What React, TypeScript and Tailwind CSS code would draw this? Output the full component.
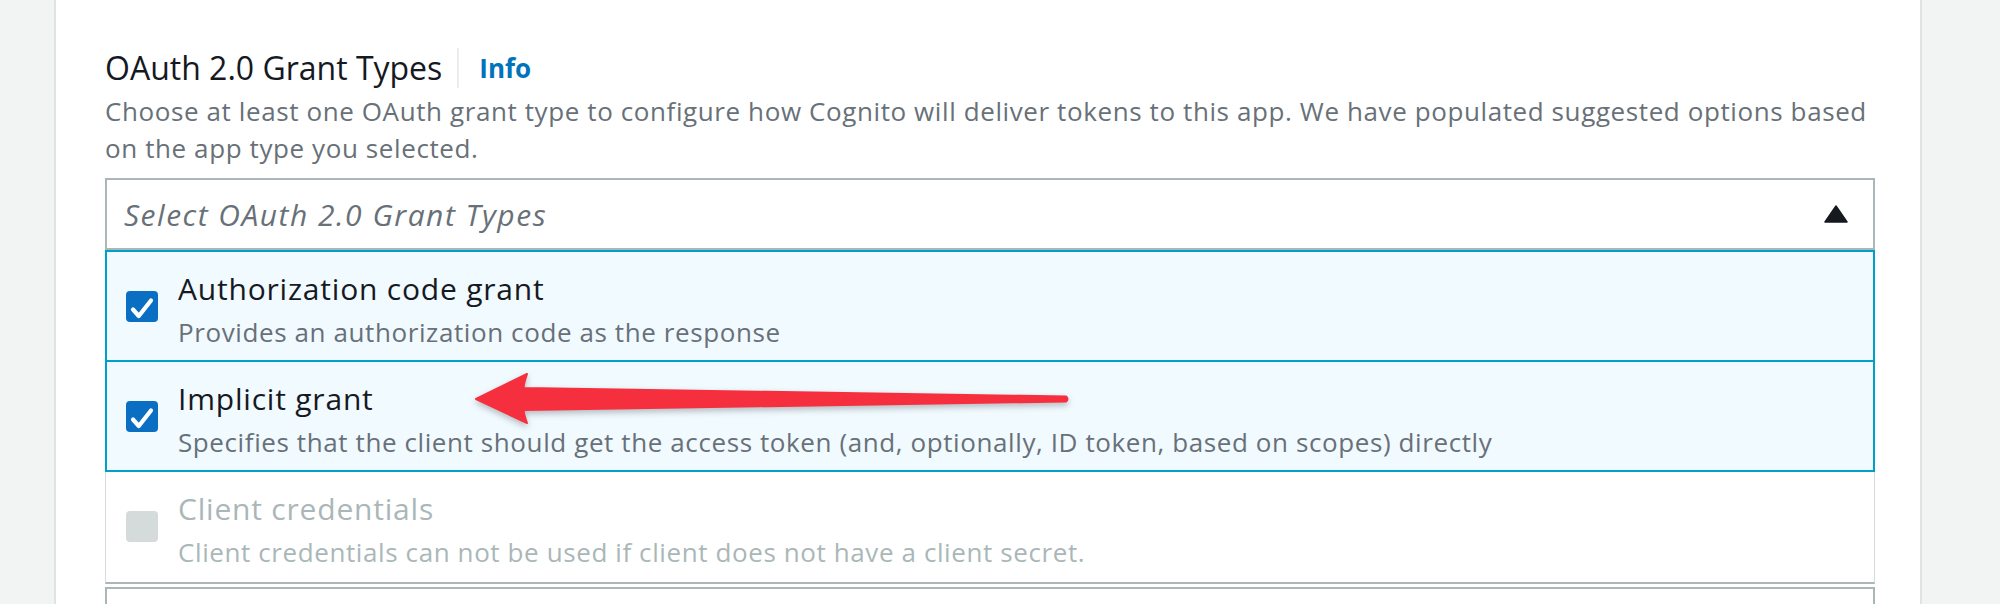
import React from 'react';
import clsx from 'clsx';

type GrantOption = {
  title: string;
  desc: string;
  checked: boolean;
  disabled?: boolean;
};

const options: GrantOption[] = [
  { title: 'Authorization code grant', desc: 'Provides an authorization code as the response', checked: true },
  {
    title: 'Implicit grant',
    desc: 'Specifies that the client should get the access token (and, optionally, ID token, based on scopes) directly',
    checked: true,
  },
  {
    title: 'Client credentials',
    desc: 'Client credentials can not be used if client does not have a client secret.',
    checked: false,
    disabled: true,
  },
];

function Checkbox({ checked, disabled }: { checked: boolean; disabled?: boolean }) {
  return (
    <div
      className={clsx(
        'mt-[22px] flex h-[31px] w-[32px] shrink-0 items-center justify-center rounded-[4px]',
        checked && 'bg-[#0a6fc2]',
        disabled && 'bg-[#d5dbdb]'
      )}
    >
      {checked && (
        <svg width="32" height="31" viewBox="0 0 32 31" fill="none">
          <path d="M7 18.5 L12.8 25 L25 9.5" stroke="#fff" strokeWidth="4.2" strokeLinecap="round" strokeLinejoin="round" />
        </svg>
      )}
    </div>
  );
}

function OptionRow({ opt, index }: { opt: GrantOption; index: number }) {
  return (
    <div
      className={clsx(
        'flex items-start pt-[17px]',
        index === 0 && 'h-[112px] border-2 border-[#00a1c9] bg-[#f1faff] pl-[19px]',
        index === 1 && 'h-[110px] border-2 border-t-0 border-[#00a1c9] bg-[#f1faff] pl-[19px]',
        index === 2 && 'h-[112px] border-x border-b-2 border-x-[#d5dbdb] border-b-[#aab7b8] bg-white pl-[20px]'
      )}
    >
      <Checkbox checked={opt.checked} disabled={opt.disabled} />
      <div className="ml-[20px] flex flex-col">
        <span
          className={clsx(
            'text-[30px] leading-[40px] tracking-[0.8px]',
            opt.disabled ? 'text-[#aab7b8]' : 'text-[#16191f]'
          )}
        >
          {opt.title}
        </span>
        <span
          className={clsx(
            'mt-[5px] text-[26px] leading-[36px] tracking-[0.6px]',
            opt.disabled ? 'text-[#aab7b8]' : 'text-[#687078]'
          )}
        >
          {opt.desc}
        </span>
      </div>
    </div>
  );
}

export default function App() {
  return (
    <div className="relative flex h-[604px] w-[2000px] overflow-hidden bg-[#f2f3f3] font-['Open_Sans',sans-serif]">
      <div className="w-[54px] shrink-0" />

      <div className="w-[1868px] shrink-0 border-x-2 border-[#dfe3e3] bg-white pl-[49px] pt-[48px]">
        <div className="w-[1770px]">
          {/* label + info link */}
          <div className="flex h-[40px] items-center">
            <h2 className="text-[32px] leading-[40px] text-[#16191f]">OAuth 2.0 Grant Types</h2>
            <div className="ml-[15px] h-[40px] w-[2px] bg-[#eaeded]" />
            <a className="ml-[20px] text-[26px] font-bold text-[#0073bb]">Info</a>
          </div>

          <p className="mt-[5px] text-[26px] leading-[37px] tracking-[0.6px] text-[#687078]">
            Choose at least one OAuth grant type to configure how Cognito will deliver tokens to this app. We have populated suggested options based
            <br />
            on the app type you selected.
          </p>

          {/* multiselect trigger */}
          <div className="mt-[11px] flex h-[72px] items-center justify-between border-2 border-[#aab7b8] pl-[17px] pr-[25px]">
            <span className="text-[30px] italic tracking-[1.5px] text-[#687078]">Select OAuth 2.0 Grant Types</span>
            <svg width="24" height="18" viewBox="0 0 24 18">
              <path d="M12 1 L23 17 L1 17 Z" fill="#16191f" stroke="#16191f" strokeWidth="1.5" strokeLinejoin="round" />
            </svg>
          </div>

          {/* open dropdown */}
          <div className="flex flex-col">
            {options.map((opt, i) => (
              <OptionRow key={opt.title} opt={opt} index={i} />
            ))}
          </div>

          {/* next field peeking below */}
          <div className="mt-[3px] h-[40px] border-x-2 border-t-2 border-[#aab7b8]" />
        </div>
      </div>

      {/* red annotation arrow */}
      <svg
        className="absolute left-[460px] top-[360px] drop-shadow-[0_3px_3px_rgba(0,0,0,0.25)]"
        width="620"
        height="80"
        viewBox="0 0 620 80"
      >
        <path
          d="M16 39 L67 14 Q63 26 64 28 L606 36.5 Q609 39 606 41.5 L64 50 Q63 52 67 63 Z"
          fill="#f62f3e"
          stroke="#f62f3e"
          strokeWidth="2"
          strokeLinejoin="round"
        />
      </svg>
    </div>
  );
}
